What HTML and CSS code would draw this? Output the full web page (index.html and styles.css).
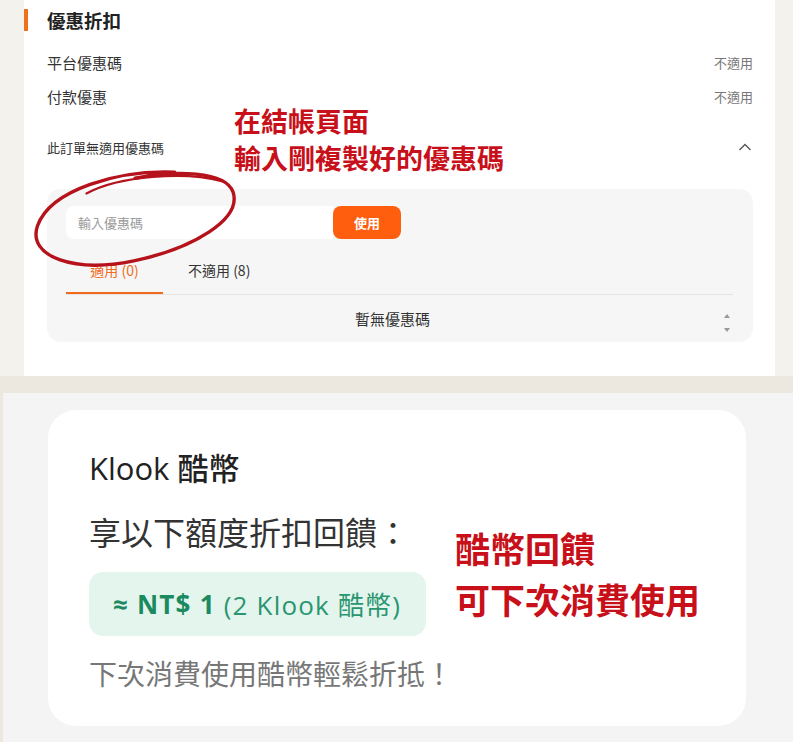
FILE: index.html
```html
<!DOCTYPE html>
<html lang="zh-Hant">
<head>
<meta charset="utf-8">
<link rel="stylesheet" href="styles.css">
</head>
<body>
<div class="top">
  <div class="panel">
    <div class="heading">優惠折扣</div>
    <div class="row"><span>平台優惠碼</span><span class="na">不適用</span></div>
    <div class="row"><span>付款優惠</span><span class="na">不適用</span></div>
    <div class="row row-small"><span>此訂單無適用優惠碼</span>
      <svg class="chev" width="14" height="10" viewBox="0 0 14 10"><polyline points="1.5,8 7,2.5 12.5,8" fill="none" stroke="#555" stroke-width="1.3"/></svg>
    </div>
    <div class="promo">
      <div class="input-row">
        <div class="input">輸入優惠碼</div>
        <div class="btn">使用</div>
      </div>
      <div class="tabs">
        <div class="tab active">適用 (0)</div>
        <div class="tab">不適用 (8)</div>
      </div>
      <div class="empty">暫無優惠碼</div>
      <div class="scroll">
        <svg width="8" height="24" viewBox="0 0 8 24"><polygon points="4,3 7,7 1,7" fill="#999"/><polygon points="4,21 7,17 1,17" fill="#999"/></svg>
      </div>
    </div>
  </div>
  <div class="note note-top">在結帳頁面<br>輸入剛複製好的優惠碼</div>
  <svg class="circle" width="220" height="110" viewBox="0 0 220 110">
    <path d="M150 6 C 95 -2, 25 10, 8 45 C -6 75, 40 96, 100 90 C 160 84, 212 60, 206 32 C 201 10, 150 4, 110 8" fill="none" stroke="#b5121b" stroke-width="3.4" stroke-linecap="round"/>
    <path d="M60 18 C 95 4, 160 6, 196 20" fill="none" stroke="#b5121b" stroke-width="2.2" stroke-linecap="round"/>
  </svg>
</div>
<div class="band"></div>
<div class="bottom">
  <div class="card">
    <div class="card-title">Klook <span class="cj">酷幣</span></div>
    <div class="card-sub">享以下額度折扣回饋：</div>
    <div class="pill"><b>≈ NT$ 1</b>&nbsp;(2 Klook 酷幣)</div>
    <div class="card-foot">下次消費使用酷幣輕鬆折抵！</div>
    <div class="note note-bottom">酷幣回饋<br>可下次消費使用</div>
  </div>
</div>
</body>
</html>
```

FILE: styles.css
```css
* { box-sizing: border-box; }
html, body { margin: 0; padding: 0; }
body {
  width: 793px;
  height: 742px;
  overflow: hidden;
  font-family: "Noto Sans CJK TC", "Noto Sans", sans-serif;
  color: #222;
  background: #f4f4f5;
}
.top {
  position: relative;
  height: 376px;
  background: #f4f2ed;
  padding-left: 24px;
  padding-right: 18px;
}
.panel {
  height: 376px;
  background: #fff;
  padding: 9px 22px 0 0;
}
.heading {
  height: 22px;
  line-height: 22px;
  border-left: 4px solid #f0711c;
  padding-left: 19px;
  font-size: 18.5px;
  font-weight: 700;
  color: #222;
}
.row {
  display: flex;
  justify-content: space-between;
  align-items: center;
  height: 34px;
  margin-left: 23px;
  font-size: 15px;
  color: #333;
}
.heading + .row { margin-top: 14px; }
.na { font-size: 13px; color: #777; }
.row-small { margin-top: 17px; font-size: 13px; }
.chev { margin-right: 1px; }
.promo {
  position: relative;
  margin: 25px 0 0 23px;
  height: 153px;
  background: #f6f6f6;
  border-radius: 14px;
  padding: 17px 20px 0 19px;
}
.input-row { display: flex; height: 33px; }
.input {
  width: 267px;
  background: #fff;
  border-radius: 8px 0 0 8px;
  font-size: 13px;
  color: #9a9a9a;
  line-height: 33px;
  padding-left: 12px;
}
.btn {
  width: 68px;
  background: #ff5e0e;
  border-radius: 8px;
  color: #fff;
  font-size: 13px;
  font-weight: 700;
  text-align: center;
  line-height: 33px;
}
.tabs {
  display: flex;
  margin-top: 9px;
  border-bottom: 1px solid #e4e4e4;
}
.tab {
  height: 46px;
  line-height: 44px;
  font-size: 14px;
  color: #333;
}
.tab.active {
  width: 97px;
  text-align: center;
  color: #f26a1b;
  border-bottom: 2px solid #f26a1b;
  margin-bottom: -1px;
}
.tab + .tab { margin-left: 25px; }
.empty {
  height: 47px;
  line-height: 47px;
  text-align: center;
  padding-right: 14px;
  font-size: 15px;
  color: #333;
}
.scroll {
  position: absolute;
  right: 22px;
  bottom: 7px;
  height: 24px;
}
.note {
  position: absolute;
  color: #c8101a;
  font-weight: 700;
  white-space: nowrap;
}
.note-top {
  left: 234px;
  top: 102px;
  font-size: 27px;
  line-height: 37px;
}
.circle {
  position: absolute;
  left: 30px;
  top: 170px;
  transform: rotate(-6deg);
}
.band {
  height: 17px;
  background: #ece8df;
}
.bottom {
  height: 349px;
  background: #f4f4f5;
  border-left: 3px solid #ece8df;
  padding: 17px 0 0 45px;
}
.card {
  position: relative;
  width: 698px;
  height: 316px;
  background: #fff;
  border-radius: 28px;
  padding: 40px 0 0 41px;
}
.card-title {
  font-family: "Open Sans", "Noto Sans CJK TC", sans-serif;
  font-size: 31px;
  line-height: 36px;
  color: #222;
}
.card-title .cj { font-weight: 500; }
.card-sub {
  margin-top: 25px;
  font-size: 32px;
  line-height: 40px;
  color: #333;
}
.pill {
  display: inline-flex;
  align-items: center;
  margin-top: 21px;
  height: 64px;
  padding: 0 25px 0 24px;
  background: #e4f5ee;
  border-radius: 14px;
  font-family: "Open Sans", "Noto Sans CJK TC", sans-serif;
  font-size: 26px;
  letter-spacing: 1.2px;
  color: #2a9670;
}
.pill b { color: #1b8a60; font-weight: 700; }
.card-foot {
  margin-top: 19px;
  font-size: 28px;
  line-height: 36px;
  color: #777;
}
.note-bottom {
  left: 407px;
  top: 112px;
  font-size: 35px;
  line-height: 51px;
}
```
